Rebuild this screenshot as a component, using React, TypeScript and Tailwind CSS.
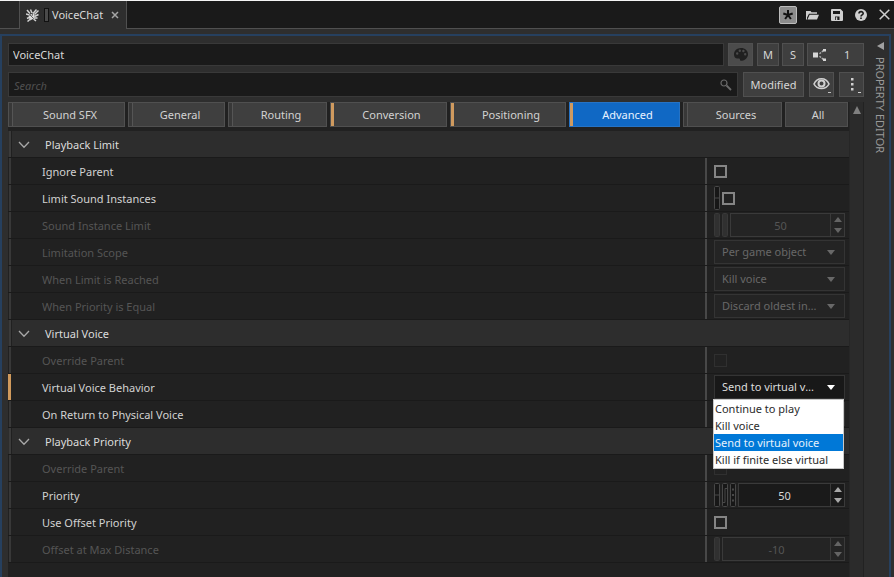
import { useState } from "react";
import type { ReactNode } from "react";

const tabs = [
  { name: "Sound SFX", bar: "gray" },
  { name: "General", bar: "gray" },
  { name: "Routing", bar: "gray" },
  { name: "Conversion", bar: "orange" },
  { name: "Positioning", bar: "orange" },
  { name: "Advanced", bar: "orange" },
  { name: "Sources", bar: "gray" },
  { name: "All", bar: "none" },
];

const behaviors = [
  "Continue to play",
  "Kill voice",
  "Send to virtual voice",
  "Kill if finite else virtual",
];

function IconButton({ label, className = "", children }: { label: string; className?: string; children: ReactNode }) {
  return (
    <button
      aria-label={label}
      className={`flex h-full shrink-0 items-center border border-[#505050] text-[#d6d6d6] ${className}`}
    >
      {children}
    </button>
  );
}

function Section({ title, children }: { title: string; children: ReactNode }) {
  const [open, setOpen] = useState(true);
  return (
    <section>
      <h2 className="flex h-[27px] border-b border-[#1a1a1a] bg-[#2d2d2d]">
        <span className="ml-px w-[3px] border-r border-[#202020] bg-[#3b3b3b]" />
        <button
          aria-expanded={open}
          onClick={() => setOpen(!open)}
          className="flex flex-1 items-center gap-[15px] pl-[6px] pt-[2px] text-left text-[#dcdcdc]"
        >
          <svg width="12" height="8" viewBox="0 0 12 8" fill="none" stroke="#a8a8a8" strokeWidth="1.3">
            <path d="M1 1l5 5.3L11 1" />
          </svg>
          {title}
        </button>
      </h2>
      {open && children}
    </section>
  );
}

function Row({ id, label, disabled, modified, children }: { id: string; label: string; disabled?: boolean; modified?: boolean; children: ReactNode }) {
  return (
    <div className="flex h-[27px] border-b border-[#1a1a1a]">
      <span className={modified ? "w-[3px] bg-[#d09a5c]" : "ml-px w-[2px] bg-[#383838]"} />
      <label
        htmlFor={id}
        className={`flex min-w-0 flex-1 items-center pl-[31px] pt-px ${disabled ? "text-[#555]" : "text-[#d2d2d2]"}`}
      >
        {label}
      </label>
      <div className="flex w-[144px] items-center border-l-2 border-[#484848] py-px pl-[7px] pr-[4px]">
        {children}
      </div>
    </div>
  );
}

function Check({ id, disabled }: { id: string; disabled?: boolean }) {
  return (
    <input
      id={id}
      type="checkbox"
      disabled={disabled}
      className="h-[13px] w-[13px] appearance-none border-2 border-[#858585] bg-[#222] checked:bg-[#1068c4] disabled:border disabled:border-[#303030]"
    />
  );
}

function NumberField({ id, value, disabled }: { id: string; value: number; disabled?: boolean }) {
  const [n, setN] = useState(value);
  return (
    <div className={`flex h-full min-w-0 flex-1 border border-[#3a3a3a] ${disabled ? "bg-[#242424]" : "bg-[#1a1a1a]"}`}>
      <input
        id={id}
        type="number"
        value={n}
        disabled={disabled}
        onChange={(e) => setN(Number(e.target.value))}
        className="min-w-0 flex-1 pt-px text-center text-[#d8d8d8] [appearance:textfield] disabled:text-[#555] [&::-webkit-inner-spin-button]:appearance-none"
      />
      <div className={`flex w-[14px] flex-col items-center justify-between border-l border-[#3a3a3a] ${disabled ? "text-[#646464]" : "text-[#a8a8a8]"}`}>
        <button aria-label="Increase" disabled={disabled} onClick={() => setN(n + 1)} className="flex flex-1 items-center">
          <svg width="8" height="5" viewBox="0 0 8 5" fill="currentColor"><path d="M0 5l4-5 4 5z" /></svg>
        </button>
        <button aria-label="Decrease" disabled={disabled} onClick={() => setN(n - 1)} className="flex flex-1 items-center">
          <svg width="8" height="5" viewBox="0 0 8 5" fill="currentColor"><path d="M0 0h8L4 5z" /></svg>
        </button>
      </div>
    </div>
  );
}

function Select({ id, options, value, disabled }: { id: string; options: string[]; value: string; disabled?: boolean }) {
  return (
    <div className={`relative h-full w-full border border-[#343434] ${disabled ? "bg-[#242424] text-[#686868]" : "bg-[#181818] text-white"}`}>
      <select
        id={id}
        defaultValue={value}
        disabled={disabled}
        className={`h-full w-full appearance-none truncate pl-[7px] pr-[26px] opacity-100 ${disabled ? "text-[#686868]" : "text-[#dcdcdc]"}`}
      >
        {options.map((o) => (
          <option key={o}>{o}</option>
        ))}
      </select>
      <svg className="pointer-events-none absolute right-[9px] top-[9px]" width="8" height="5" viewBox="0 0 8 5" fill="currentColor">
        <path d="M0 0h8L4 5z" />
      </svg>
    </div>
  );
}

// Small link / RTPC / state markers in front of a value
function Marker({ kind, dim }: { kind: "link" | "rtpc" | "state"; dim?: boolean }) {
  return (
    <svg className="mr-[2px] shrink-0" width="6" height="24" viewBox="0 0 6 24" fill={dim ? "#303030" : "#171717"} stroke={dim ? "#383838" : "#484848"}>
      <rect x="0.5" y="0.5" width="5" height="23" rx="1" />
      {kind === "link" && !dim && <path d="M1 12h4" />}
      {kind === "rtpc" && !dim && <path d="M1 19.500h2v-14h2" fill="none" />}
      {kind === "state" && !dim && <path d="M2 6.500h2M2 12h2M2 17.500h2" strokeWidth="2" />}
    </svg>
  );
}

export default function App() {
  const [tab, setTab] = useState("Advanced");
  const [behavior, setBehavior] = useState("Send to virtual voice");

  return (
    <div className="flex min-h-screen flex-col border-t border-[#f4f4f4] bg-[#2e2e2e] font-['Noto_Sans','Open_Sans',sans-serif] text-[11px] leading-4 text-[#d2d2d2]">
      <header className="flex h-[28px] bg-[#1a1a1a]">
        <div className="w-[20px] border-b border-r border-[#505050] bg-[#262626]" />
        <div className="flex w-[107px] items-center border-r border-[#505050] bg-[#2e2e2e] pl-[6px]">
          <svg width="13" height="13" viewBox="0 0 13 13" fill="#dcdcdc">
            <path d="M2.500 7.500L5 5l3-.5.8 3L7 10l-3 1.500z" />
            <path d="M1 1l3 3.500M4.500.5L6 4M0 5l3.500 1M7 4.500L10.500.5M8.500 5.500L12.500 1.500M8.500 7.500l4-2M8 9l3.500 0M7.500 10l2.500 2M1 9.500l2-1M1.500 12.500L5 9.500" fill="none" stroke="#d2d2d2" strokeWidth="1.5" />
            <path d="M4 6l3 3M6.500 5L6 7" fill="none" stroke="#2e2e2e" strokeWidth="0.7" />
          </svg>
          <span className="ml-[5px] mr-[3px] h-[14px] w-[5px] border border-[#111] bg-[#4a4a4a]" />
          <span className="whitespace-nowrap text-[#dadada]">VoiceChat</span>
          <button aria-label="Close tab" className="ml-[8px]">
            <svg width="8" height="8" viewBox="0 0 8 8" stroke="#a5a5a5" strokeWidth="1.5"><path d="M1 1l6 6M7 1L1 7" /></svg>
          </button>
        </div>
        <div className="flex flex-1 items-center justify-end gap-[12px] border-b border-[#505050] pr-[4px] text-[#cfcfcf]">
          <button aria-label="Pin" className="-mr-[3px] flex h-[18px] w-[18px] items-center justify-center rounded-[2px] border border-[#bcbcbc] bg-[#8c8c8c]">
            <svg width="12" height="12" viewBox="0 0 12 12" stroke="#111" strokeWidth="2">
              <path d="M6 6V1M6 6L1.300 4.500M6 6l4.700-1.500M6 6l-2.900 4M6 6l2.900 4" />
            </svg>
          </button>
          <button aria-label="Open">
            <svg width="13" height="10" viewBox="0 0 13 10" fill="currentColor">
              <path d="M0 1h4.500l1 1.200H11v1.600H3L1 7.500V9.500H0zM3.600 4.800H13L11 9.500H1.500z" />
            </svg>
          </button>
          <button aria-label="Save">
            <svg width="12" height="12" viewBox="0 0 12 12" fill="currentColor" fillRule="evenodd">
              <path d="M1 0h8.500L12 2.500V11a1 1 0 0 1-1 1H1a1 1 0 0 1-1-1V1a1 1 0 0 1 1-1zM2 2v3h7V2zM4 7.500V11h4.500V7.500zM4.800 8.300h1.500V11H4.800z" />
            </svg>
          </button>
          <button aria-label="Help">
            <svg width="12" height="12" viewBox="0 0 12 12">
              <circle cx="6" cy="6" r="6" fill="currentColor" />
              <path d="M4 4.600C4 2 8.200 2 8.200 4.500 8.200 6 6 5.800 6 7.500M6 8.400v1.600" fill="none" stroke="#1a1a1a" strokeWidth="1.6" />
            </svg>
          </button>
          <button aria-label="Close">
            <svg width="11" height="11" viewBox="0 0 11 11" stroke="currentColor" strokeWidth="1.5"><path d="M0.700 0.700l9.600 9.600M10.300 0.700L0.700 10.300" /></svg>
          </button>
        </div>
      </header>

      <main className="mr-[3px] mt-[5px] flex flex-1 border-2 border-b-0 border-[#26405f] pl-[6px]">
        <div className="flex min-w-0 flex-1 flex-col pt-[7px]">
          <div className="flex h-[23px] gap-[3px]">
            <input
              aria-label="Name"
              defaultValue="VoiceChat"
              className="mr-px min-w-0 flex-1 border border-[#393939] bg-[#1a1a1a] px-[4px] pt-px text-[#d8d8d8]"
            />
            <IconButton label="Color" className="mr-px w-[25px] justify-center bg-[#4b4b4b]">
              <svg width="14" height="13" viewBox="0 0 14 13" fillRule="evenodd" fill="#202020">
                <path d="M7 0C3 0 0 2.800 0 6.200 0 9.500 2 11 4 10.500c1.500-.4 2 .3 2 1.200 0 1 1 1.300 2 1.100C11.500 12 14 9.500 14 6.200 14 2.600 11 0 7 0zM2 5.500a1.200 1.200 0 1 1 2.400 0 1.200 1.200 0 1 1-2.400 0zM4.600 2.800a1.200 1.200 0 1 1 2.400 0 1.200 1.200 0 1 1-2.400 0zM8.200 3a1.200 1.200 0 1 1 2.400 0 1.200 1.200 0 1 1-2.400 0zM10 6.200a1.200 1.200 0 1 1 2.400 0 1.200 1.200 0 1 1-2.400 0z" />
              </svg>
            </IconButton>
            <IconButton label="Mute" className="w-[22px] justify-center bg-[#3f3f3f]">M</IconButton>
            <IconButton label="Solo" className="w-[22px] justify-center bg-[#3f3f3f]">S</IconButton>
            <IconButton label="References" className="w-[57px] gap-[17px] bg-[#3f3f3f] pl-[5px]">
              <svg width="14" height="12" viewBox="0 0 14 12" fill="#d6d6d6">
                <rect x="0" y="3.5" width="5" height="5" />
                <path d="M6.500 4.800l4-3.300M6.500 7.200l4 3.300" stroke="#b0b0b0" strokeWidth="1.4" strokeDasharray="2 1" />
                <rect x="10" y="0" width="3" height="2.5" />
                <rect x="10" y="9.5" width="3" height="2.5" />
              </svg>
              <span>1</span>
            </IconButton>
          </div>

          <div className="mt-[6px] flex h-[25px] gap-[5px]">
            <div className="flex min-w-0 flex-1 items-center border border-[#393939] bg-[#1a1a1a] pr-[5px]">
              <input
                type="search"
                aria-label="Search"
                placeholder="Search"
                className="h-full min-w-0 flex-1 px-[5px] pt-px placeholder:italic placeholder:text-[#505050]"
              />
              <svg width="12" height="12" viewBox="0 0 12 12" fill="none" stroke="#6a6a6a">
                <circle cx="4" cy="4" r="3" strokeWidth="1.2" />
                <path d="M6.500 6.500l4.500 4.500" strokeWidth="1.8" />
              </svg>
            </div>
            <IconButton label="Modified" className="w-[61px] justify-center bg-[#3f3f3f]">Modified</IconButton>
            <IconButton label="Visibility" className="w-[25px] justify-center bg-[#3f3f3f]">
              <svg width="20" height="18" viewBox="0 0 20 18" fill="none">
                <path d="M2 8C5 1 14 1 17 8 14 14 5 14 2 8z" stroke="#d0d0d0" strokeWidth="1.6" />
                <circle cx="9.500" cy="7.500" r="3" stroke="#d0d0d0" strokeWidth="2" />
                <path d="M16 16.500h3" stroke="#c0c0c0" />
              </svg>
            </IconButton>
            <IconButton label="More options" className="w-[25px] justify-center bg-[#3f3f3f]">
              <svg width="20" height="18" viewBox="0 0 20 18" fill="#d0d0d0">
                <path d="M9 2h2.500v2.500H9zM9 7h2.500v2.500H9zM9 12h2.500v2.500H9zM16 16h3v1h-3z" />
              </svg>
            </IconButton>
          </div>

          <div className="mt-[5px] flex flex-1">
            <div className="flex min-w-0 flex-1 flex-col bg-[#212121]">
              <nav role="tablist" className="mb-[4px] grid h-[25px] grid-cols-[117fr_97fr_99fr_117fr_116fr_111fr_99fr_63fr] gap-[3px] pr-px">
                {tabs.map((t) => (
                  <button
                    key={t.name}
                    role="tab"
                    aria-selected={tab === t.name}
                    onClick={() => setTab(t.name)}
                    className={`flex min-w-0 border ${tab === t.name ? "border-[#2673c5] bg-[#1068c4] text-[#e8f2ff]" : "border-[#505050] bg-[#3f3f3f]"}`}
                  >
                    {t.bar === "orange" && <span className="h-full w-[3px] shrink-0 bg-[#cf9a5f]" />}
                    {t.bar === "gray" && <span className="h-full w-[4px] shrink-0 border-r border-[#555] bg-[#383838]" />}
                    <span className="flex h-full flex-1 items-center justify-center pl-[3px]">{t.name}</span>
                  </button>
                ))}
              </nav>

              <Section title="Playback Limit">
                <Row id="ignore" label="Ignore Parent"><Check id="ignore" /></Row>
                <Row id="limit" label="Limit Sound Instances">
                  <Marker kind="link" />
                  <Check id="limit" />
                </Row>
                <Row id="instances" label="Sound Instance Limit" disabled>
                  <Marker kind="link" dim />
                  <Marker kind="rtpc" dim />
                  <NumberField id="instances" value={50} disabled />
                </Row>
                <Row id="scope" label="Limitation Scope" disabled>
                  <Select id="scope" options={["Per game object", "Globally"]} value="Per game object" disabled />
                </Row>
                <Row id="reached" label="When Limit is Reached" disabled>
                  <Select id="reached" options={["Kill voice", "Use virtual voice settings"]} value="Kill voice" disabled />
                </Row>
                <Row id="equal" label="When Priority is Equal" disabled>
                  <Select id="equal" options={["Discard oldest instance", "Discard newest instance"]} value="Discard oldest instance" disabled />
                </Row>
              </Section>

              <Section title="Virtual Voice">
                <Row id="override-voice" label="Override Parent" disabled><Check id="override-voice" disabled /></Row>
                <Row id="behavior" label="Virtual Voice Behavior" modified>
                  <div className="relative h-full w-full">
                    <Select id="behavior" key={behavior} options={behaviors} value={behavior} />
                    <ul role="listbox" aria-label="Virtual Voice Behavior" className="absolute -left-px right-px top-full z-10 border border-[#c8c8c8] bg-white text-[#2b2b2b]">
                      {behaviors.map((b) => (
                        <li
                          key={b}
                          role="option"
                          aria-selected={b === behavior}
                          onClick={() => setBehavior(b)}
                          className={`h-[17px] whitespace-nowrap pl-px leading-[17px] ${b === behavior ? "bg-[#0078d7] text-[#e4f1fc]" : ""}`}
                        >
                          {b}
                        </li>
                      ))}
                    </ul>
                  </div>
                </Row>
                <Row id="return" label="On Return to Physical Voice">
                  <Select id="return" options={["Play from elapsed time", "Play from beginning", "Resume"]} value="Play from elapsed time" />
                </Row>
              </Section>

              <Section title="Playback Priority">
                <Row id="override-priority" label="Override Parent" disabled><Check id="override-priority" disabled /></Row>
                <Row id="priority" label="Priority">
                  <Marker kind="link" />
                  <Marker kind="rtpc" />
                  <Marker kind="state" />
                  <NumberField id="priority" value={50} />
                </Row>
                <Row id="use-offset" label="Use Offset Priority"><Check id="use-offset" /></Row>
                <Row id="offset" label="Offset at Max Distance" disabled>
                  <Marker kind="link" dim />
                  <NumberField id="offset" value={-10} disabled />
                </Row>
              </Section>
            </div>

            <div className="flex w-[15px] justify-center border-l border-r border-l-[#262626] border-r-[#222] bg-[#2b2b2b] pt-[4px]">
              <svg width="8" height="8" viewBox="0 0 8 8" fill="#808080"><path d="M0 8L4 0l4 8z" /></svg>
            </div>
          </div>
        </div>

        <aside className="flex w-[25px] flex-col items-center gap-[7px] pl-[7px] pt-[6px] text-[#9a9a9a]">
          <svg width="7" height="8" viewBox="0 0 7 8" fill="#a0a0a0"><path d="M7 0v8L0 4z" /></svg>
          <span className="[writing-mode:vertical-rl]">PROPERTY EDITOR</span>
        </aside>
      </main>
    </div>
  );
}
